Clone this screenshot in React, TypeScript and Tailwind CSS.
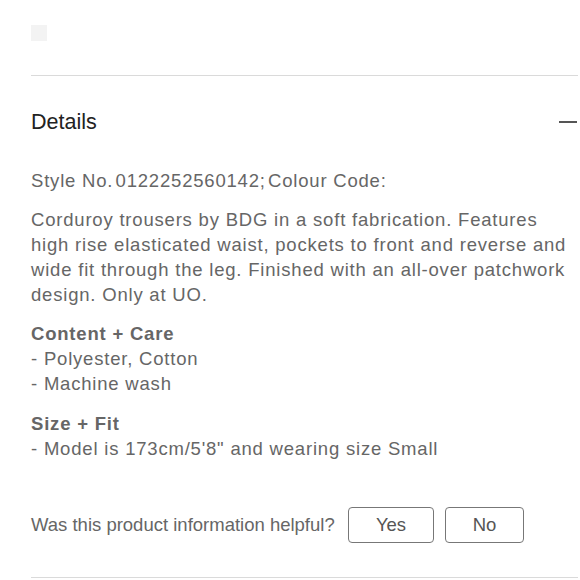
const bodyText = "text-[18.5px] leading-[25px] tracking-[0.8px] text-[#666]";

export default function App() {
  return (
    <div
      className="w-[580px] h-[580px] overflow-hidden bg-white pl-[31px] pr-[2px]"
      style={{ fontFamily: '"Liberation Sans", Arial, sans-serif' }}
    >
      {/* image placeholder */}
      <div className="pt-[25px]">
        <div className="w-[16px] h-[16px] bg-[#f3f3f3]" />
      </div>

      <div className="mt-[34px] border-t border-[#dadada]" />

      {/* Details header */}
      <div className="flex items-center justify-between h-[92px]">
        <h2 className="text-[21.5px] text-[#222]">Details</h2>
        <div className="w-[18px] h-[2px] bg-[#555] mr-[1px]" />
      </div>

      <div className={bodyText}>
        <p>Style No.&#8202;0122252560142;&#8202;Colour Code:</p>
        <p className="mt-[14px]">
          Corduroy trousers by BDG in a soft fabrication. Features
          <br />
          high rise elasticated waist, pockets to front and reverse and
          <br />
          wide fit through the leg. Finished with an all-over patchwork
          <br />
          design. Only at UO.
        </p>

        <h3 className="mt-[14px] font-bold">Content + Care</h3>
        <p>- Polyester, Cotton</p>
        <p>- Machine wash</p>

        <h3 className="mt-[15px] font-bold">Size + Fit</h3>
        <p>- Model is 173cm/5'8" and wearing size Small</p>
      </div>

      {/* helpful */}
      <div className="flex items-center mt-[46px] h-[36px]">
        <span className="text-[18.5px] text-[#666]">Was this product information helpful?</span>
        <button className="ml-auto w-[86px] h-[36px] border border-[#777] rounded-[4px] text-[18.5px] text-[#555]">
          Yes
        </button>
        <button className="ml-[11px] mr-[54px] w-[79px] h-[36px] border border-[#777] rounded-[4px] text-[18.5px] text-[#555]">
          No
        </button>
      </div>

      <div className="mt-[34px] border-t border-[#dadada]" />
    </div>
  );
}
